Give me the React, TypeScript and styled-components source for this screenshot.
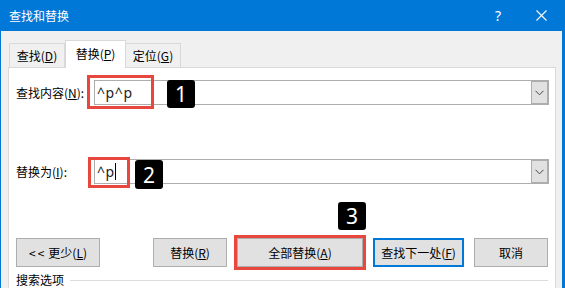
import React from "react";
import styled, { createGlobalStyle } from "styled-components";

const GlobalStyle = createGlobalStyle`
  html, body {
    margin: 0;
    padding: 0;
    background: #ffffff;
  }
  * {
    box-sizing: border-box;
  }
`;

const CJK = `"Noto Sans CJK SC", "Noto Sans", sans-serif`;
const LATIN = `"Noto Sans", "Liberation Sans", sans-serif`;
const RED = "#e8473d";
const BLUE = "#0078d7";

const Window = styled.div`
  width: 565px;
  height: 288px;
  overflow: hidden;
  background: #f0f0f0;
  border-left: 1px solid ${BLUE};
  border-right: 3px solid ${BLUE};
  font-family: ${CJK};
  font-size: 12px;
  color: #000;
`;

const TitleBar = styled.div`
  height: 31px;
  background: ${BLUE};
  color: #fff;
  display: flex;
  align-items: center;
  padding-left: 8px;
  padding-right: 1px;
`;

const Title = styled.div`
  font-size: 12px;
  line-height: 16px;
  flex: 1;
`;

const TitleButton = styled.div<{ w: number }>`
  width: ${(p) => p.w}px;
  height: 31px;
  display: flex;
  align-items: center;
  justify-content: center;
  font-family: ${LATIN};
  font-size: 14px;
`;

const Client = styled.div`
  padding: 9px 6px 0 7px;
`;

const TabStrip = styled.div`
  display: flex;
  align-items: flex-end;
  height: 28px;
  padding-left: 1px;
  margin-bottom: -1px;
  position: relative;
  z-index: 1;
`;

const Tab = styled.div<{ active?: boolean; first?: boolean; w: number }>`
  width: ${(p) => p.w}px;
  height: ${(p) => (p.active ? 28 : 25)}px;
  background: ${(p) => (p.active ? "#fff" : "#f0f0f0")};
  border: 1px solid #d9d9d9;
  border-bottom: ${(p) => (p.active ? "none" : "1px solid #d9d9d9")};
  border-left: ${(p) => (p.first || p.active ? "1px solid #d9d9d9" : "none")};
  display: flex;
  align-items: center;
  justify-content: center;
  padding-bottom: ${(p) => (p.active ? 2 : 0)}px;
  line-height: 16px;
`;

const Panel = styled.div`
  background: #fff;
  border: 1px solid #d9d9d9;
  min-height: 240px;
  padding: 12px 6px 0 7px;
`;

const FieldRow = styled.div<{ gapTop?: number }>`
  display: flex;
  align-items: center;
  height: 25px;
  margin-top: ${(p) => p.gapTop ?? 0}px;
`;

const Label = styled.div`
  width: 78px;
  line-height: 16px;
  white-space: nowrap;
`;

const Combo = styled.div`
  position: relative;
  flex: 1;
  height: 25px;
  border: 1px solid #adadad;
  background: #fff;
  display: flex;
`;

const ComboText = styled.div`
  flex: 1;
  display: flex;
  align-items: center;
  padding-left: 2px;
  font-family: ${LATIN};
  font-size: 14px;
  letter-spacing: 0.6px;
  color: #222;
`;

const Caret = styled.span`
  display: inline-block;
  width: 1px;
  height: 17px;
  background: #000;
`;

const DropButton = styled.div`
  width: 17px;
  height: 23px;
  background: #e1e1e1;
  border: 1px solid #adadad;
  display: flex;
  align-items: center;
  justify-content: center;
`;

const Highlight = styled.div<{ l: number; t: number; w: number; h: number }>`
  position: absolute;
  left: ${(p) => p.l}px;
  top: ${(p) => p.t}px;
  width: ${(p) => p.w}px;
  height: ${(p) => p.h}px;
  border: 3px solid ${RED};
  pointer-events: none;
`;

const Badge = styled.div<{ l: number; t: number; h?: number }>`
  position: absolute;
  left: ${(p) => p.l}px;
  top: ${(p) => p.t}px;
  width: 28px;
  height: ${(p) => p.h ?? 28}px;
  background: #000;
  border-radius: 3px;
  color: #fff;
  font-family: ${LATIN};
  font-size: 21px;
  display: flex;
  align-items: center;
  justify-content: center;
`;

const ButtonRow = styled.div`
  display: flex;
  align-items: center;
  gap: 10px;
  margin-top: 54px;
  margin-right: 1px;
  height: 29px;
`;

const Button = styled.div<{ w: number; variant?: "default" | "focus" | "marked" }>`
  position: relative;
  width: ${(p) => p.w}px;
  height: 29px;
  background: #e1e1e1;
  border: ${(p) =>
    p.variant === "focus" ? `2px solid ${BLUE}` : "1px solid #adadad"};
  outline: ${(p) => (p.variant === "marked" ? `3px solid ${RED}` : "none")};
  display: flex;
  align-items: center;
  justify-content: center;
  line-height: 16px;
  white-space: nowrap;
`;

const Arrows = styled.span`
  letter-spacing: 2px;
  margin-right: 2px;
`;

const Spacer = styled.div`
  flex: 1;
`;

const Section = styled.div`
  display: flex;
  align-items: center;
  margin-top: 5px;
  margin-right: 1px;
  line-height: 16px;
`;

const SectionLine = styled.div`
  flex: 1;
  height: 1px;
  background: #dcdcdc;
  margin-left: 6px;
`;

const Chevron = () => (
  <svg width="9" height="6" viewBox="0 0 9 6">
    <polyline points="0.5,0.8 4.5,4.8 8.5,0.8" fill="none" stroke="#444" strokeWidth="1" />
  </svg>
);

const CloseIcon = () => (
  <svg width="11" height="11" viewBox="0 0 11 11">
    <line x1="0.5" y1="0.5" x2="10.5" y2="10.5" stroke="#fff" strokeWidth="1.1" />
    <line x1="10.5" y1="0.5" x2="0.5" y2="10.5" stroke="#fff" strokeWidth="1.1" />
  </svg>
);

const App = (): JSX.Element => {
  return (
    <>
      <GlobalStyle />
      <Window>
        <TitleBar>
          <Title>查找和替换</Title>
          <TitleButton w={46}>?</TitleButton>
          <TitleButton w={40}>
            <CloseIcon />
          </TitleButton>
        </TitleBar>
        <Client>
          <TabStrip>
            <Tab w={56} first>
              查找(<u>D</u>)
            </Tab>
            <Tab w={61} active>
              替换(<u>P</u>)
            </Tab>
            <Tab w={55}>
              定位(<u>G</u>)
            </Tab>
          </TabStrip>
          <Panel>
            <FieldRow>
              <Label>
                查找内容(<u>N</u>):
              </Label>
              <Combo>
                <ComboText>^p^p</ComboText>
                <DropButton>
                  <Chevron />
                </DropButton>
                <Highlight l={-8} t={-6} w={67} h={34} />
                <Badge l={72} t={-1}>1</Badge>
              </Combo>
            </FieldRow>
            <FieldRow gapTop={54}>
              <Label>
                替换为(<u>I</u>):
              </Label>
              <Combo>
                <ComboText>
                  ^p
                  <Caret />
                </ComboText>
                <DropButton>
                  <Chevron />
                </DropButton>
                <Highlight l={-7} t={-3} w={42} h={31} />
                <Badge l={40} t={0} h={29}>2</Badge>
              </Combo>
            </FieldRow>
            <ButtonRow>
              <Button w={84}>
                <Arrows>&lt;&lt;</Arrows>更少(<u>L</u>)
              </Button>
              <Spacer />
              <Button w={74}>
                替换(<u>R</u>)
              </Button>
              <Button w={126} variant="marked">
                全部替换(<u>A</u>)
                <Badge l={100} t={-37}>3</Badge>
              </Button>
              <Button w={91} variant="focus">
                查找下一处(<u>F</u>)
              </Button>
              <Button w={74}>取消</Button>
            </ButtonRow>
            <Section>
              搜索选项
              <SectionLine />
            </Section>
          </Panel>
        </Client>
      </Window>
    </>
  );
};

export default App;
